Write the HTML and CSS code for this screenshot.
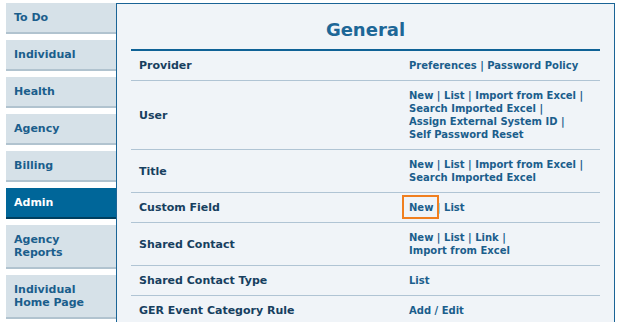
FILE: index.html
```html
<!DOCTYPE html>
<html>
<head>
<meta charset="utf-8">
<link rel="stylesheet" href="styles.css">
</head>
<body>
<div class="layout">
  <nav class="sidebar">
    <a class="nav-item">To Do</a>
    <a class="nav-item">Individual</a>
    <a class="nav-item">Health</a>
    <a class="nav-item">Agency</a>
    <a class="nav-item">Billing</a>
    <a class="nav-item active">Admin</a>
    <a class="nav-item">Agency<br>Reports</a>
    <a class="nav-item">Individual<br>Home Page</a>
  </nav>
  <main class="panel">
    <h1 class="title">General</h1>
    <div class="table">
      <div class="row">
        <div class="label">Provider</div>
        <div class="links"><a>Preferences</a> | <a>Password Policy</a></div>
      </div>
      <div class="row">
        <div class="label">User</div>
        <div class="links"><a>New</a> | <a>List</a> | <a>Import from Excel</a> |<br><a>Search Imported Excel</a> |<br><a>Assign External System ID</a> |<br><a>Self Password Reset</a></div>
      </div>
      <div class="row">
        <div class="label">Title</div>
        <div class="links"><a>New</a> | <a>List</a> | <a>Import from Excel</a> |<br><a>Search Imported Excel</a></div>
      </div>
      <div class="row">
        <div class="label">Custom Field</div>
        <div class="links"><a class="highlight">New</a> | <a>List</a></div>
      </div>
      <div class="row">
        <div class="label">Shared Contact</div>
        <div class="links"><a>New</a> | <a>List</a> | <a>Link</a> |<br><a>Import from Excel</a></div>
      </div>
      <div class="row">
        <div class="label">Shared Contact Type</div>
        <div class="links"><a>List</a></div>
      </div>
      <div class="row">
        <div class="label">GER Event Category Rule</div>
        <div class="links"><a>Add / Edit</a></div>
      </div>
    </div>
  </main>
</div>
</body>
</html>
```
FILE: styles.css
```css
html, body {
  margin: 0;
  padding: 0;
  background: #ffffff;
}
body {
  padding: 3px 0 0 6px;
  font-family: "DejaVu Sans", Verdana, sans-serif;
  font-size: 11px;
  font-weight: bold;
  line-height: 13px;
  color: #1b5e8c;
  overflow: hidden;
  height: 319px;
}
.layout {
  display: flex;
  align-items: flex-start;
}
.sidebar {
  width: 110px;
  display: flex;
  flex-direction: column;
  gap: 6px;
  flex-shrink: 0;
}
.nav-item {
  display: block;
  background: #d6e1e8;
  border-bottom: 2px solid #b1c3cf;
  padding: 8px;
  color: #1b5e8c;
  text-decoration: none;
}
.nav-item.active {
  background: #006699;
  border-bottom-color: #003f5f;
  color: #ffffff;
}
.panel {
  width: 499px;
  height: 400px;
  border: 1px solid #1a6496;
  background: #f0f4f8;
  padding: 0 14px;
  box-sizing: border-box;
  flex-shrink: 0;
}
.title {
  margin: 0;
  height: 47px;
  line-height: 52px;
  font-size: 18px;
  text-align: center;
  color: #1d6797;
  border-bottom: 2px solid #0f6296;
  box-sizing: border-box;
}
.row {
  display: grid;
  grid-template-columns: 270px 1fr;
  border-bottom: 1px solid #b0c4d4;
}
.label, .links {
  padding: 8px;
}
.label {
  color: #173f5f;
  align-self: center;
}
.links {
  font-size: 10px;
  color: #1b5e8c;
  white-space: nowrap;
}
.links a {
  color: #1b5e8c;
}
.highlight {
  position: relative;
}
.highlight::after {
  content: "";
  position: absolute;
  left: -7px;
  right: -6px;
  top: -7px;
  bottom: -6px;
  border: 2px solid #f07f1f;
}
```
